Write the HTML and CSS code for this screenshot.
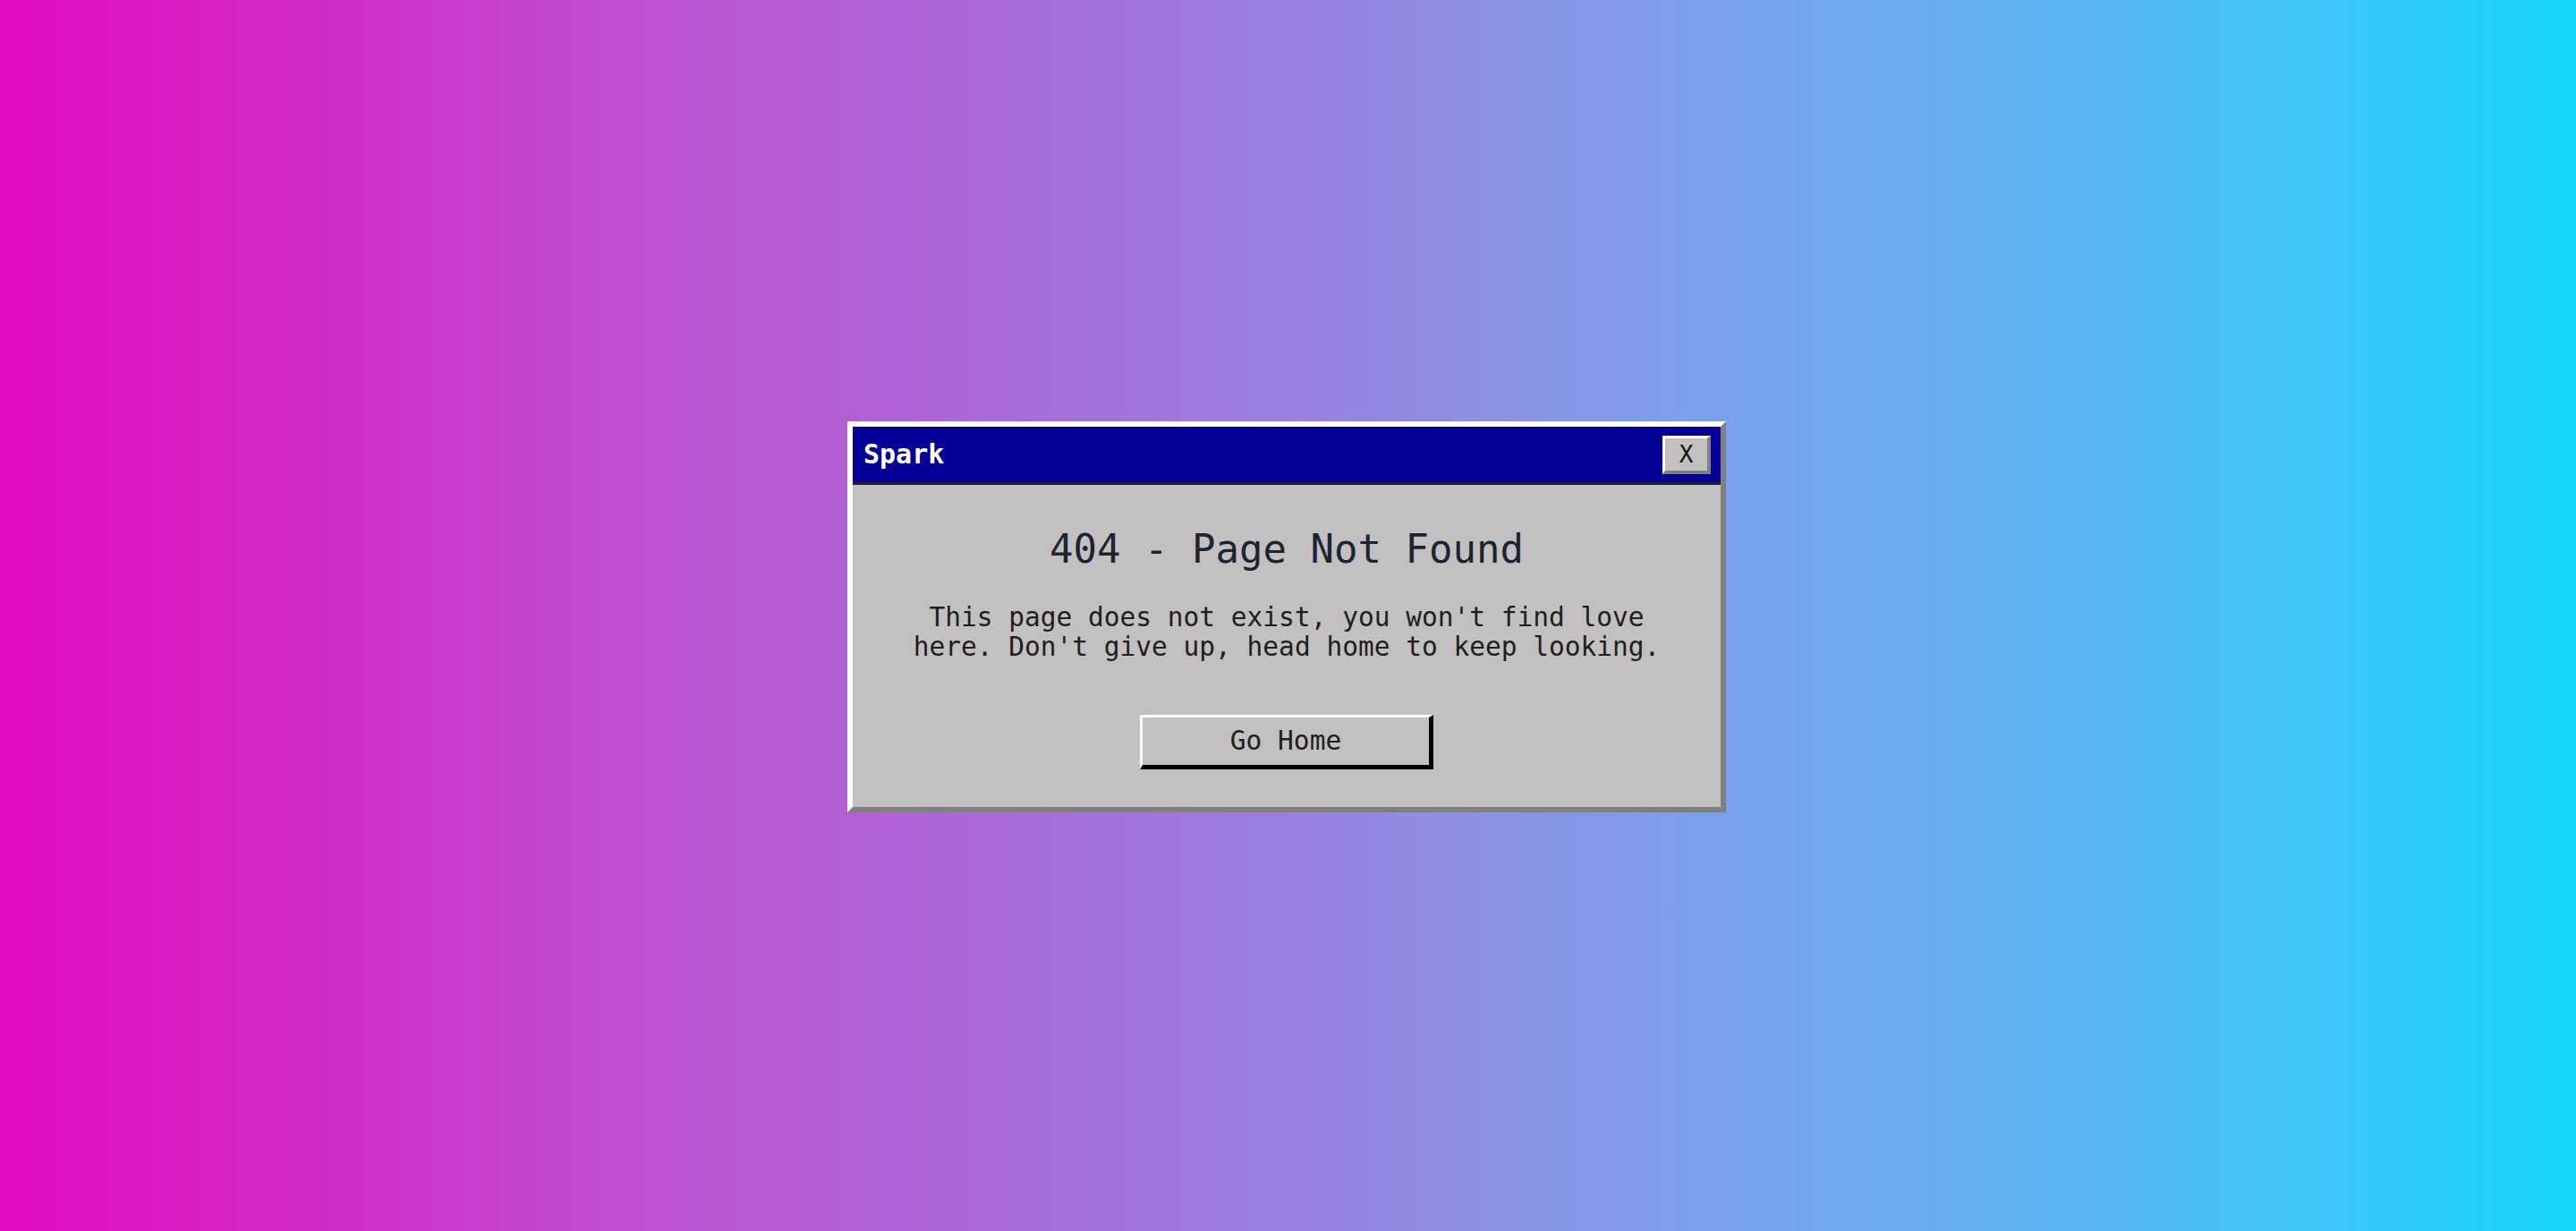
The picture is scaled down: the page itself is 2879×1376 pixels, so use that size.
FILE: index.html
```html
<!DOCTYPE html>
<html lang="en">
<head>
<meta charset="utf-8">
<title>Spark - 404</title>
<link rel="stylesheet" href="styles.css">
</head>
<body>
  <main class="page">
    <section class="window" role="dialog" aria-labelledby="win-title">
      <header class="titlebar">
        <span class="titlebar-text" id="win-title">Spark</span>
        <button class="close-btn" type="button" aria-label="Close">X</button>
      </header>
      <div class="window-body">
        <h1 class="heading">404 - Page Not Found</h1>
        <p class="message">This page does not exist, you won't find love here. Don't give up, head home to keep looking.</p>
        <a class="home-btn" href="#">Go Home</a>
      </div>
    </section>
  </main>
</body>
</html>
```

FILE: styles.css
```css
* {
  box-sizing: border-box;
}

html, body {
  margin: 0;
  padding: 0;
  height: 100%;
}

body {
  font-family: "DejaVu Sans Mono", "Liberation Mono", monospace;
  background: linear-gradient(to right,
    #e20bc3 0%,
    #d22ac6 12%,
    #bf52d2 25%,
    #b25fd6 33%,
    #a470dc 42%,
    #9a7fe0 50%,
    #8b92e6 58%,
    #7aa1ec 67%,
    #5eb5f3 80%,
    #3ec7f8 90%,
    #14d5fb 100%);
}

.page {
  height: 100vh;
  display: flex;
  align-items: center;
  justify-content: center;
  padding-right: 3px;
  padding-top: 3px;
}

.window {
  width: 982px;
  border-style: solid;
  border-width: 6px;
  border-color: #ffffff #808080 #808080 #ffffff;
  background: #c2c0c1;
}

.titlebar {
  height: 65px;
  background: #050097;
  border-bottom: 3px solid #222222;
  display: flex;
  align-items: center;
  justify-content: space-between;
  padding: 0 11px 0 12px;
}

.titlebar-text {
  color: #ffffff;
  font-size: 30px;
  font-weight: bold;
  line-height: 1;
}

.close-btn {
  width: 54px;
  height: 43px;
  padding: 0;
  margin: 0;
  background: #c2c0c1;
  border-style: solid;
  border-width: 3px 4px 4px 3px;
  border-color: #ffffff #808080 #808080 #ffffff;
  font-family: "DejaVu Sans Mono", "Liberation Mono", monospace;
  font-size: 26px;
  color: #111111;
  line-height: 1;
  display: flex;
  align-items: center;
  justify-content: center;
}

.window-body {
  padding: 46px 50px 42px;
  display: flex;
  flex-direction: column;
  align-items: center;
  text-align: center;
}

.heading {
  margin: 0;
  font-size: 44px;
  line-height: 52px;
  font-weight: normal;
  color: #1c2431;
}

.message {
  margin: 34px 0 0;
  font-size: 29.5px;
  line-height: 33px;
  color: #1e1e1e;
}

.home-btn {
  margin-top: 59px;
  width: 328px;
  height: 61px;
  display: flex;
  align-items: center;
  justify-content: center;
  border-style: solid;
  border-width: 3px 5px 5px 3px;
  border-color: #ffffff #000000 #000000 #ffffff;
  background: #c2c0c1;
  color: #1e1e1e;
  font-size: 29.5px;
  line-height: 33px;
  text-decoration: none;
}
```
